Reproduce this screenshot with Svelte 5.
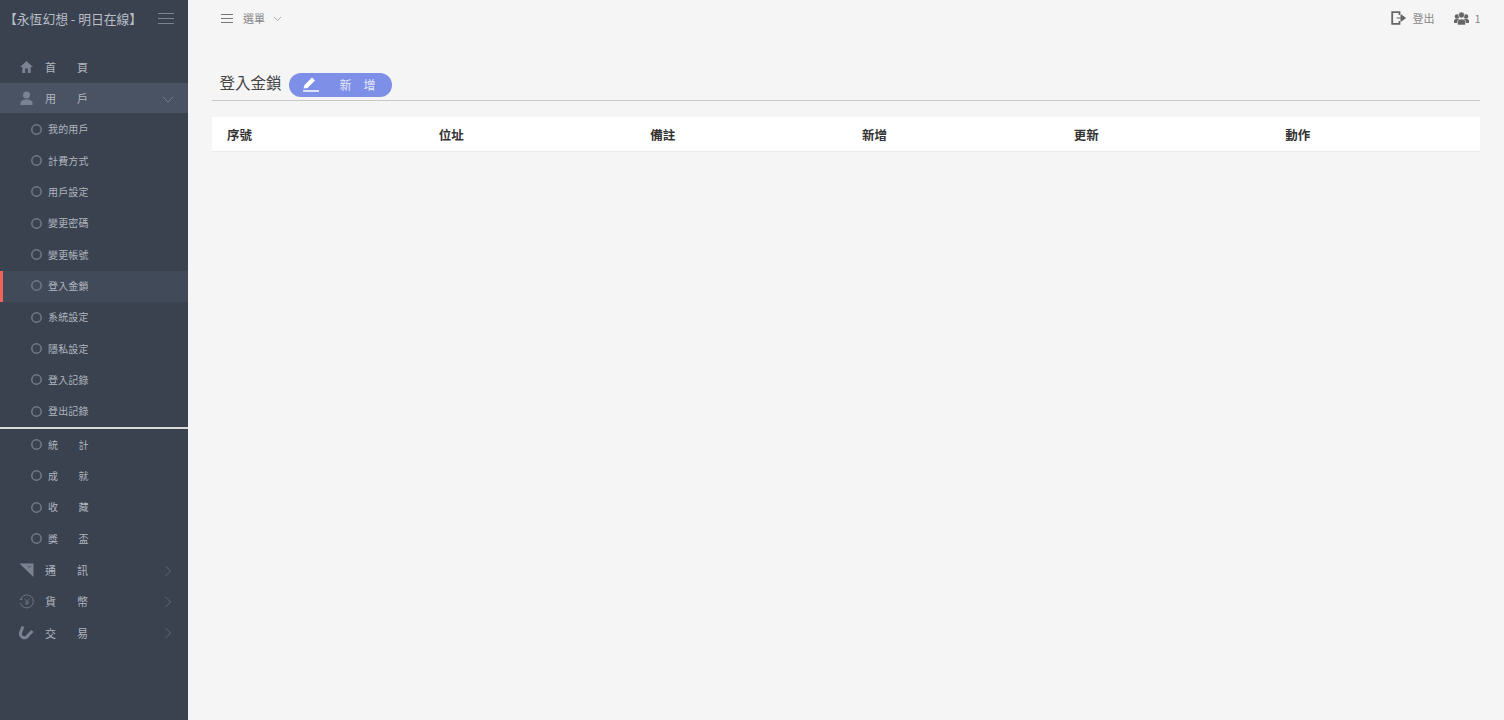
<script>
  const subA = ['我的用戶','計費方式','用戶設定','變更密碼','變更帳號','登入金鎖','系統設定','隱私設定','登入記錄','登出記錄'];
  const subB = ['統計','成就','收藏','獎盃'];
  const cols = ['序號','位址','備註','新增','更新','動作'];
</script>

{#snippet dot()}
  <svg class="dot" width="11" height="11" viewBox="0 0 11 11"><circle cx="5.500" cy="5.500" r="4.700" fill="none" stroke="#727a88" stroke-width="1.500"/></svg>
{/snippet}

<div class="page">
  <aside class="side">
    <div class="brand">
      <span class="brand-name">【永恆幻想 - 明日在線】</span>
      <svg class="burger" width="16" height="12" viewBox="0 0 16 12"><path d="M0 .5h16M0 5.500h16M0 10.500h16" stroke="#7b8390" stroke-width="1"/></svg>
    </div>
    <nav class="nav">
      <div class="top">
        <svg class="ti" width="14" height="14" viewBox="0 0 14 14"><path d="M7 1 13.500 7h-2.300v6H8.300V8.500H5.700V13H2.800V7H.5z" fill="#7a8391"/></svg>
        <span class="lab">首頁</span>
      </div>
      <div class="top open">
        <svg class="ti" width="14" height="14" viewBox="0 0 14 14"><circle cx="7" cy="4" r="3.500" fill="#7a8391"/><path d="M1 14v-2c0-2 2.500-3.500 6-3.500s6 1.500 6 3.500v2z" fill="#7a8391"/></svg>
        <span class="lab">用戶</span>
        <svg class="chev" width="12" height="12" viewBox="0 0 12 12"><path d="M1 4l5 5 5-5" fill="none" stroke="#6f7887"/></svg>
      </div>
      {#each subA as s}
        <div class="sub" class:active={s === '登入金鎖'}>{@render dot()}<span class="sublab">{s}</span></div>
      {/each}
      <hr class="sep" />
      {#each subB as s}
        <div class="sub">{@render dot()}<span class="sublab">{s}</span></div>
      {/each}
      <div class="top">
        <svg class="ti" width="15" height="14" viewBox="0 0 15 14"><path d="M.5 .5h14V14z" fill="#7a8391"/><path d="M8.500 3l2 1.500L12 3" fill="none" stroke="#3a4250" stroke-width=".8"/></svg>
        <span class="lab">通訊</span>
        <svg class="chev" width="12" height="12" viewBox="0 0 12 12"><path d="M3.500 1l5 5-5 5" fill="none" stroke="#5f6876"/></svg>
      </div>
      <div class="top">
        <svg class="ti" width="15" height="15" viewBox="0 0 15 15"><path d="M2 4.500a6.500 6.500 0 1 1-.5 4.500" fill="none" stroke="#6a7381"/><path d="M.5 6h3L2.200 3.800z" fill="#6a7381"/><path d="M5.500 4.500 8 7.500l2.500-3M8 7.500V11M6 8h4M6 9.700h4" fill="none" stroke="#6a7381" stroke-width=".8"/></svg>
        <span class="lab">貨幣</span>
        <svg class="chev" width="12" height="12" viewBox="0 0 12 12"><path d="M3.500 1l5 5-5 5" fill="none" stroke="#5f6876"/></svg>
      </div>
      <div class="top">
        <svg class="ti" width="15" height="15" viewBox="0 0 15 15"><path d="M4 1.500 1.800 7a4 4 0 0 0 7.200 3.500L13.500 6" fill="none" stroke="#7a8391" stroke-width="3"/></svg>
        <span class="lab">交易</span>
        <svg class="chev" width="12" height="12" viewBox="0 0 12 12"><path d="M3.500 1l5 5-5 5" fill="none" stroke="#5f6876"/></svg>
      </div>
    </nav>
  </aside>

  <main class="main">
    <header class="bar">
      <div class="menu">
        <svg width="12" height="9" viewBox="0 0 12 9"><path d="M0 .5h12M0 4.500h12M0 8.500h12" stroke="#777"/></svg>
        <span>選單</span>
        <svg width="9" height="9" viewBox="0 0 9 9"><path d="M1 3l3.500 3.500L8 3" fill="none" stroke="#aaa"/></svg>
      </div>
      <div class="right">
        <div class="ritem">
          <svg width="15" height="14" viewBox="0 0 15 14"><path d="M8.500 4V1.200H1.200v11.600h7.300V10" fill="none" stroke="#666" stroke-width="1.800"/><path d="M5.500 7h6M10 3.800 14.500 7 10 10.200z" fill="#666" stroke="#666"/></svg>
          <span>登出</span>
        </div>
        <div class="ritem users">
          <svg width="15" height="13" viewBox="0 0 15 13"><circle cx="3" cy="4.500" r="2.300" fill="#666"/><circle cx="12" cy="4.500" r="2.300" fill="#666"/><path d="M0 11V9c0-1.500 1-2 3-2s3 .5 3 2v2zM9 11V9c0-1.500 1-2 3-2s3 .5 3 2v2z" fill="#666"/><circle cx="7.500" cy="3" r="3" fill="#666" stroke="#f5f5f5" stroke-width=".6"/><path d="M3.500 13v-3c0-2 1.500-3 4-3s4 1 4 3v3z" fill="#666" stroke="#f5f5f5" stroke-width=".6"/></svg>
          <span>1</span>
        </div>
      </div>
    </header>

    <section class="content">
      <div class="head">
        <h1>登入金鎖</h1>
        <button class="add">
          <svg width="17" height="16" viewBox="0 0 17 16"><path d="M1 15h16" stroke="#fff" stroke-width="1.500"/><path d="M1.500 12.500 2.500 9 10 1.500l3 3L5.500 12z" fill="#fff"/></svg>
          <span class="addlab">新增</span>
        </button>
      </div>
      <div class="table">
        {#each cols as c}<div class="th">{c}</div>{/each}
      </div>
    </section>
  </main>
</div>

<style>
  :global(body) {
    margin: 0;
    background: #f5f5f5;
    font-family: "Noto Sans CJK TC", "Liberation Sans", sans-serif;
  }
  .page { display: flex; width: 1504px; height: 720px; overflow: hidden; }
  .side { width: 188px; flex: none; background: #3a4250; color: #b0b5be; }
  .brand {
    height: 36px; display: flex; align-items: center; justify-content: space-between;
    padding: 0 14px 0 4px; box-sizing: border-box;
  }
  .brand-name { font-size: 12.800px; color: #b8bdc6; white-space: nowrap; }
  .burger { margin-top: 2px; }
  .nav { padding-top: 15.500px; }
  .top {
    height: 31.330px; display: flex; align-items: center; padding: 0 0 1px 19px; position: relative;
    box-sizing: border-box;
  }
  .top.open { background: #495364; height: 30.500px; margin-bottom: .830px; }
  .ti { flex: none; width: 15px; }
  .lab {
    position: absolute; left: 45px; width: 43px; font-size: 11px;
    text-align-last: justify; color: #b0b5be; line-height: 14px;
  }
  .chev { position: absolute; right: 14px; top: 10px; }
  .sub {
    height: 31.330px; display: flex; align-items: center; padding: 0 0 1px 30.500px;
    box-sizing: border-box;
  }
  .sub.active { background: #414a59; border-left: 3px solid #f0635a; padding-left: 27.500px; }
  .dot { flex: none; display: block; }
  .sublab {
    margin-left: 6.500px; width: 40.500px; font-size: 10px; line-height: 14px;
    text-align-last: justify; color: #b0b5be;
  }
  .sep { border: 0; height: 2px; background: #d8d9db; margin: 0; }
  .main { flex: 1; min-width: 0; }
  .bar {
    height: 36px; display: flex; align-items: center; justify-content: space-between;
    padding: 0 23.500px 0 33px; font-size: 11px; color: #888;
  }
  .menu { display: flex; align-items: center; gap: 10px; }
  .menu svg:last-child { margin-left: -2px; }
  .right { display: flex; align-items: center; gap: 20px; }
  .ritem { display: flex; align-items: center; gap: 6px; }
  .users { gap: 5px; }
  .content { padding: 0 24px 0 23.500px; }
  .head {
    margin-top: 35px; height: 29px; display: flex; align-items: flex-start;
    border-bottom: 1px solid #c8c8c8; padding-left: 8px;
  }
  h1 { margin: 0; font-size: 15.500px; font-weight: 400; color: #444; line-height: 22px; }
  .add {
    margin-left: 7px; margin-top: 2px; width: 103px; height: 24px; border: 0; border-radius: 12px;
    background: #7d8fe6; color: #e4e8fb; display: flex; align-items: center;
    padding: 0 0 2px 13px; font: inherit; font-size: 12px; box-sizing: border-box;
  }
  .addlab { margin-left: 21px; width: 36px; text-align-last: justify; }
  .table {
    margin-top: 16px; background: #fff; height: 35px; display: grid;
    grid-template-columns: repeat(6, 211.670px); align-items: center;
    border-bottom: 1px solid #e8e9eb; box-sizing: border-box;
  }
  .th { padding-left: 15.500px; font-size: 12.500px; font-weight: 700; color: #333; }
</style>
